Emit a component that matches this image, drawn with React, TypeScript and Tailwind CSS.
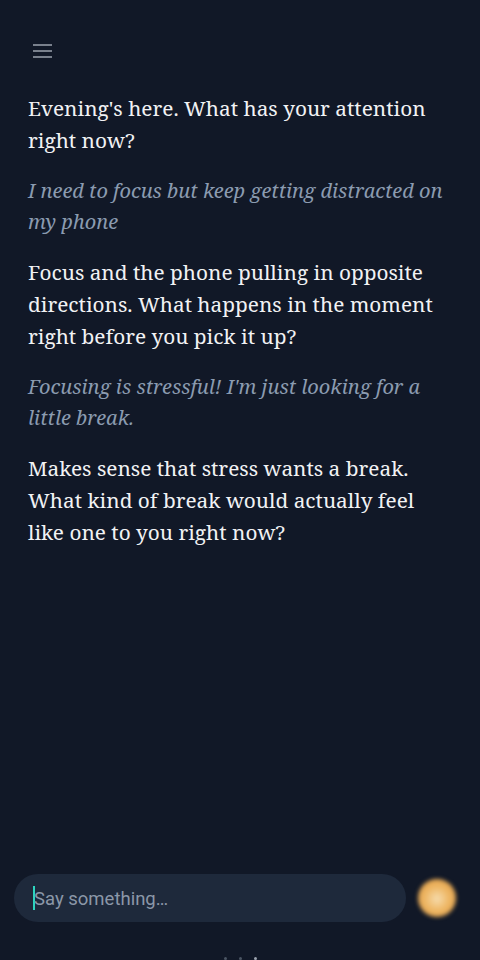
import React from 'react';

const messages = [
  { from: 'ai', text: "Evening's here. What has your attention right now?" },
  { from: 'me', text: 'I need to focus but keep getting distracted on my phone' },
  { from: 'ai', text: 'Focus and the phone pulling in opposite directions. What happens in the moment right before you pick it up?' },
  { from: 'me', text: "Focusing is stressful! I'm just looking for a little break." },
  { from: 'ai', text: 'Makes sense that stress wants a break. What kind of break would actually feel like one to you right now?' },
];

const App: React.FC = () => {
  return (
    <div className="h-[960px] w-full bg-[#111827] flex flex-col overflow-hidden">
      {/* Top bar */}
      <div className="pt-[43px] pl-[32px] h-[92px]">
        <svg width="21" height="16" viewBox="0 0 21 16" className="text-[#9ca3af]">
          <path d="M1 2h19M1 8h19M1 14h19" stroke="currentColor" strokeWidth="1.6" />
        </svg>
      </div>

      {/* Conversation */}
      <div
        className="flex-1 px-[28px] flex flex-col gap-[19px]"
        style={{ fontFamily: '"Noto Serif", "DejaVu Serif", serif' }}
      >
        {messages.map((m, i) => (
          <p
            key={i}
            className={
              m.from === 'ai'
                ? 'text-[20.8px] leading-[32px] text-[#f1f2f4]'
                : 'text-[20px] leading-[31px] italic text-[#8b9bb0]'
            }
          >
            {m.text}
          </p>
        ))}
      </div>

      {/* Input */}
      <div className="flex items-center gap-[12px] pl-[14px] pr-[24px]">
        <div className="flex-1 h-[48px] rounded-full bg-[#1e293b] flex items-center pl-[19px]">
          <span className="w-[2px] h-[24px] bg-[#2dd4bf]" />
          <span
            className="text-[18.5px] text-[#8b97a8] -ml-[1px] mt-[3px]"
            style={{ fontFamily: 'Roboto, "Noto Sans", sans-serif' }}
          >
            Say something…
          </span>
        </div>
        <div
          className="w-[38px] h-[38px] rounded-full blur-[2px]"
          style={{ background: 'radial-gradient(circle at 50% 52%, #f6dcae 0%, #eeb663 45%, #d8923b 100%)' }}
        />
      </div>

      {/* gesture dots */}
      <div className="h-[38px] flex items-end justify-center gap-[12px]">
        <span className="w-[3px] h-[3px] rounded-full bg-[#4b5563]" />
        <span className="w-[3px] h-[3px] rounded-full bg-[#4b5563]" />
        <span className="w-[3px] h-[3px] rounded-full bg-[#9ca3af]" />
      </div>
    </div>
  );
};

export default App;
